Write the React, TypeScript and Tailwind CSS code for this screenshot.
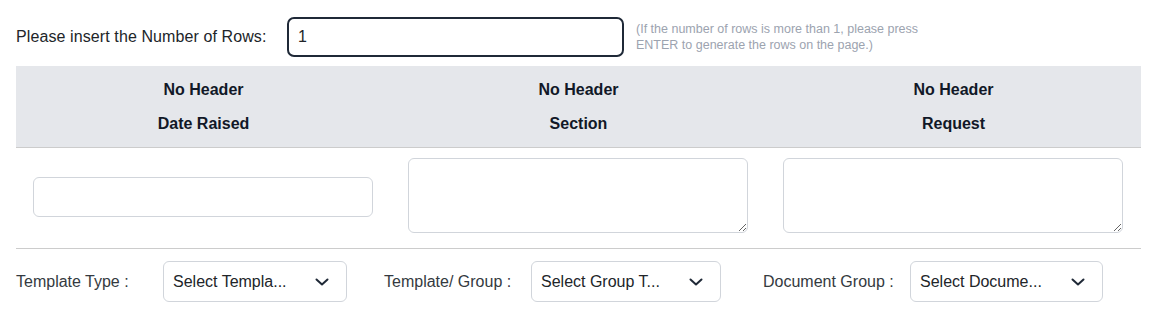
import { useState } from "react"

type Col = { title: string; multi: boolean }

const columns: Col[] = [
  { title: "Date Raised", multi: false },
  { title: "Section", multi: true },
  { title: "Request", multi: true },
]

function Chevron() {
  return (
    <svg width="14" height="8" viewBox="0 0 14 8" fill="none" className="shrink-0">
      <path d="M1.5 1.5 7 6.5l5.5-5" stroke="#1f2937" strokeWidth="2" strokeLinecap="round" strokeLinejoin="round" />
    </svg>
  )
}

function FakeSelect({ text, width }: { text: string; width: string }) {
  return (
    <button
      type="button"
      className={`${width} h-[41px] flex items-center justify-between pl-[9px] pr-[17px] border border-[#d1d5db] rounded-[6px] bg-white text-[16px] text-[#212529]`}
    >
      <span className="whitespace-nowrap">{text}</span>
      <Chevron />
    </button>
  )
}

export default function App() {
  const [rows, setRows] = useState("1")

  return (
    <div className="font-['Liberation_Sans',Arial,sans-serif] bg-white min-h-[314px] pl-4 w-[1141px]">
      {/* number of rows */}
      <div className="flex items-center pt-[17px]">
        <label className="w-[271px] text-[16px] tracking-[0.1px] text-[#212529]">Please insert the Number of Rows:</label>
        <input
          value={rows}
          onChange={(e) => setRows(e.target.value)}
          className="w-[337px] h-[40px] border-2 border-[#1f2937] rounded-[7px] px-[9px] text-[16px] text-[#212529] outline-none"
        />
        <p className="ml-[12px] text-[12.5px] leading-[16.5px] text-[#9ca3af]">
          (If the number of rows is more than 1, please press
          <br />
          ENTER to generate the rows on the page.)
        </p>
      </div>

      {/* table */}
      <div className="mt-[9px]">
        <div className="grid grid-cols-3 bg-[#e5e7eb] border-b border-[#cccccc]">
          {columns.map((c) => (
            <div key={c.title} className="flex flex-col items-center gap-[10px] pt-[12px] pb-[11px] text-[16px] leading-6 font-bold text-[#111827]">
              <span>No Header</span>
              <span>{c.title}</span>
            </div>
          ))}
        </div>
        <div className="grid grid-cols-3 h-[101px] border-b border-[#cccccc]">
          {columns.map((c) =>
            c.multi ? (
              <div key={c.title} className="flex pl-[17px] pt-[10px]">
                <textarea className="w-[340px] h-[75px] border border-[#d1d5db] rounded-[6px] outline-none px-2 py-1" />
              </div>
            ) : (
              <div key={c.title} className="flex pl-[17px] pt-[29px]">
                <input className="w-[340px] h-[40px] border border-[#d1d5db] rounded-[6px] outline-none px-2" />
              </div>
            )
          )}
        </div>
      </div>

      {/* template filters */}
      <div className="flex items-center mt-[12px] text-[16px] text-[#343a40]">
        <div className="flex items-center">
          <span className="w-[147px] pt-px">Template Type :</span>
          <FakeSelect text="Select Templa..." width="w-[184px]" />
        </div>
        <div className="flex items-center ml-[37px]">
          <span className="w-[147px] pt-px">Template/ Group :</span>
          <FakeSelect text="Select Group T..." width="w-[190px]" />
        </div>
        <div className="flex items-center ml-[42px]">
          <span className="w-[147px] pt-px">Document Group :</span>
          <FakeSelect text="Select Docume..." width="w-[193px]" />
        </div>
      </div>
    </div>
  )
}
